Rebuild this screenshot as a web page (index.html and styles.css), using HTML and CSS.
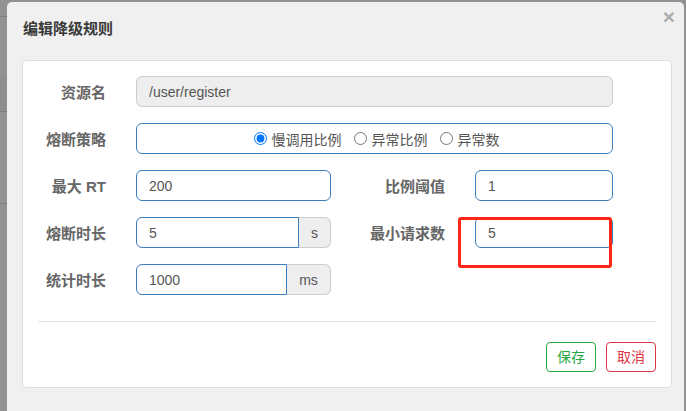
FILE: index.html
```html
<!DOCTYPE html>
<html lang="zh-CN">
<head>
<meta charset="utf-8">
<title>编辑降级规则</title>
<link rel="stylesheet" href="styles.css">
</head>
<body>
<div class="page-edge"></div>
<div class="dialog">
  <div class="dialog-header">
    <h4 class="dialog-title">编辑降级规则</h4>
    <span class="close">×</span>
  </div>
  <div class="card">
    <div class="form-grid">
      <label class="label">资源名</label>
      <div class="field span-3"><input class="control control-disabled" value="/user/register" readonly></div>

      <label class="label">熔断策略</label>
      <div class="field span-3">
        <div class="control radio-box">
          <label class="radio"><input type="radio" name="grade" checked>慢调用比例</label>
          <label class="radio"><input type="radio" name="grade">异常比例</label>
          <label class="radio"><input type="radio" name="grade">异常数</label>
        </div>
      </div>

      <label class="label">最大 RT</label>
      <div class="field"><input class="control" value="200"></div>
      <label class="label">比例阈值</label>
      <div class="field"><input class="control" value="1"></div>

      <label class="label">熔断时长</label>
      <div class="field input-group">
        <input class="control control-group" value="5">
        <span class="addon addon-s">s</span>
      </div>
      <label class="label">最小请求数</label>
      <div class="field marked">
        <input class="control" value="5">
        <span class="annotation"></span>
      </div>

      <label class="label">统计时长</label>
      <div class="field input-group">
        <input class="control control-group" value="1000">
        <span class="addon addon-ms">ms</span>
      </div>
    </div>
    <hr class="divider">
    <div class="actions">
      <button class="btn btn-save">保存</button>
      <button class="btn btn-cancel">取消</button>
    </div>
  </div>
</div>
</body>
</html>
```

FILE: styles.css
```css
html, body {
  margin: 0;
  padding: 0;
}
body {
  width: 686px;
  height: 411px;
  overflow: hidden;
  display: flex;
  align-items: flex-start;
  background: #929292;
  font-family: "Liberation Sans", "Noto Sans CJK SC", sans-serif;
}
.page-edge {
  width: 7px;
  height: 411px;
  flex: none;
  background:
    linear-gradient(#7f7f7f, #7f7f7f) 0 16px / 100% 1px no-repeat,
    linear-gradient(#8d8e90, #8d8e90) 0 77px / 100% 34px no-repeat,
    linear-gradient(#7c7c7c, #7c7c7c) 0 111px / 100% 1px no-repeat,
    linear-gradient(#7c7c7c, #7c7c7c) 0 203px / 100% 1px no-repeat,
    #929292;
}
.dialog {
  margin-top: 2px;
  width: 677px;
  height: 409px;
  flex: none;
  background: #f0f0f0;
  border-radius: 5px 5px 0 0;
}
.dialog-header {
  height: 58px;
  box-sizing: border-box;
  padding: 17px 9px 0 16px;
  display: flex;
  justify-content: space-between;
  align-items: flex-start;
}
.dialog-title {
  margin: 0;
  font-size: 15px;
  line-height: 20px;
  font-weight: bold;
  color: #3a3a3a;
}
.close {
  margin-top: -12px;
  font-size: 21px;
  line-height: 20px;
  font-weight: bold;
  color: #adadad;
}
.card {
  margin-left: 15px;
  width: 650px;
  box-sizing: border-box;
  padding: 15px;
  background: #fff;
  border: 1px solid #ddd;
  border-radius: 4px;
}
.form-grid {
  display: grid;
  grid-template-columns: 98px 195px 144px 138px;
  grid-auto-rows: 31px;
  row-gap: 16px;
  align-items: center;
}
.label {
  text-align: right;
  padding-right: 30px;
  font-size: 15px;
  font-weight: bold;
  color: #666;
  white-space: nowrap;
}
.field {
  height: 31px;
  display: flex;
}
.span-3 {
  grid-column: 2 / 5;
}
.control {
  width: 100%;
  height: 31px;
  box-sizing: border-box;
  margin: 0;
  padding: 0 12px;
  border: 1px solid #3b7dbd;
  border-radius: 6px;
  background: #fff;
  font-family: "Liberation Sans", "Noto Sans CJK SC", sans-serif;
  font-size: 14px;
  color: #555;
  outline: none;
}
.control-disabled {
  background: #eee;
  border-color: #ccc;
}
.radio-box {
  display: flex;
  justify-content: center;
  align-items: center;
  gap: 12px;
  padding-left: 16px;
}
.radio {
  display: flex;
  align-items: center;
  font-size: 14px;
  color: #555;
  white-space: nowrap;
}
.radio input {
  width: 13px;
  height: 13px;
  margin: 0 5px 0 0;
}
.input-group .control-group {
  flex: 1;
  min-width: 0;
  border-radius: 6px 0 0 6px;
}
.addon {
  flex: none;
  box-sizing: border-box;
  height: 31px;
  display: flex;
  align-items: center;
  justify-content: center;
  background: #eee;
  border: 1px solid #ccc;
  border-left: 0;
  border-radius: 0 6px 6px 0;
  font-size: 14px;
  color: #555;
}
.addon-s {
  width: 32px;
}
.addon-ms {
  width: 44px;
}
.marked {
  position: relative;
}
.annotation {
  position: absolute;
  left: -17px;
  top: 0;
  width: 154px;
  height: 51px;
  box-sizing: border-box;
  border: 3px solid #fe2416;
  border-radius: 3px;
}
.divider {
  margin: 26px 0 20px;
  height: 0;
  border: 0;
  border-top: 1px solid #e5e5e5;
}
.actions {
  display: flex;
  justify-content: flex-end;
  gap: 10px;
}
.btn {
  height: 30px;
  padding: 0 10px;
  margin: 0;
  background: #fff;
  border: 1px solid;
  border-radius: 4px;
  font-family: "Liberation Sans", "Noto Sans CJK SC", sans-serif;
  font-size: 14px;
  line-height: 28px;
}
.btn-save {
  color: #28a745;
  border-color: #28a745;
}
.btn-cancel {
  color: #dc3545;
  border-color: #dc3545;
}
```
